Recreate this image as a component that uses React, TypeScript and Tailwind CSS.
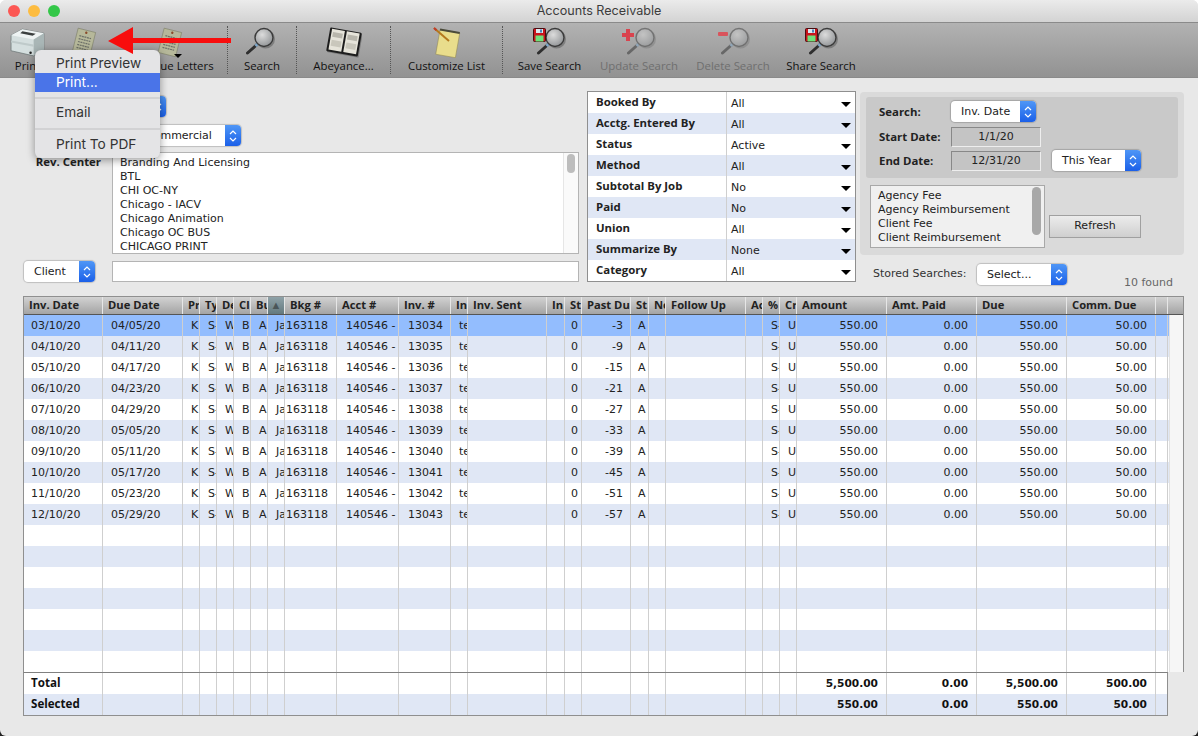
// Accounts Receivable window: toolbar, search filters, invoice list and totals.
import type { ReactNode } from "react";

const colsClass =
  "grid grid-cols-[79px_80px_17px_17px_17px_17px_17px_17px_52px_62px_52px_17px_79px_18px_17px_49px_18px_17px_80px_17px_17px_17px_90px_90px_90px_89px_12px]";

const boldClass = "font-['Open_Sans',sans-serif] font-bold";

const headers = [
  "Inv. Date", "Due Date", "Pr", "Ty", "De", "Cl", "Bu", "▲", "Bkg #", "Acct #", "Inv. #", "In", "Inv. Sent",
  "In", "St", "Past Du", "St", "Ne", "Follow Up", "Ac", "%", "Cr", "Amount", "Amt. Paid", "Due", "Comm. Due", "",
];

const invoices = [
  ["03/10/20", "04/05/20", "13034", "-3"],
  ["04/10/20", "04/11/20", "13035", "-9"],
  ["05/10/20", "04/17/20", "13036", "-15"],
  ["06/10/20", "04/23/20", "13037", "-21"],
  ["07/10/20", "04/29/20", "13038", "-27"],
  ["08/10/20", "05/05/20", "13039", "-33"],
  ["09/10/20", "05/11/20", "13040", "-39"],
  ["10/10/20", "05/17/20", "13041", "-45"],
  ["11/10/20", "05/23/20", "13042", "-51"],
  ["12/10/20", "05/29/20", "13043", "-57"],
];

const filters = [
  ["Booked By", "All"],
  ["Acctg. Entered By", "All"],
  ["Status", "Active"],
  ["Method", "All"],
  ["Subtotal By Job", "No"],
  ["Paid", "No"],
  ["Union", "All"],
  ["Summarize By", "None"],
  ["Category", "All"],
];

const revCenters = [
  "Branding And Licensing", "BTL", "CHI OC-NY", "Chicago - IACV", "Chicago Animation", "Chicago OC BUS", "CHICAGO PRINT",
];

function Magnifier({ className = "" }: { className?: string }) {
  return (
    <svg viewBox="0 0 30 28" className={className}>
      <defs>
        <radialGradient id="lens" cx="0.4" cy="0.35" r="0.8">
          <stop offset="0" stopColor="#dcdcdc" />
          <stop offset="1" stopColor="#85888b" />
        </radialGradient>
      </defs>
      <circle cx="20.5" cy="12" r="9.5" fill="#333" opacity="0.35" />
      <line x1="12" y1="17.5" x2="2.5" y2="26" stroke="#2f2f2f" strokeWidth="3" strokeLinecap="round" />
      <line x1="13" y1="16.5" x2="10.5" y2="19" stroke="#7fa7c9" strokeWidth="3" />
      <circle cx="19" cy="10.5" r="9" fill="url(#lens)" stroke="#3a3a3a" strokeWidth="1.4" />
    </svg>
  );
}

function Floppy({ className }: { className: string }) {
  return (
    <svg viewBox="0 0 13 14" className={`absolute h-[14px] w-[13px] ${className}`}>
      <rect x="0.5" y="0.5" width="12" height="13" rx="1" fill="#c8141c" stroke="#4a0d10" />
      <rect x="3" y="1" width="7" height="4" fill="#dbe8ef" />
      <rect x="7" y="1.5" width="2" height="3" fill="#4c86b8" />
      <rect x="2.5" y="7.5" width="8" height="6" fill="#6fe07a" />
    </svg>
  );
}

function SearchIcon({ lens, badge, dim }: { lens: string; badge?: ReactNode; dim?: boolean }) {
  return (
    <div className="relative h-[32px] w-[36px]">
      <Magnifier className={`absolute top-[1px] h-[28px] w-[30px] ${lens} ${dim ? "opacity-50" : ""}`} />
      {badge}
    </div>
  );
}

function Printer() {
  return (
    <svg viewBox="0 0 38 32" className="h-[33px] w-[39px]">
      <path d="M3 10 L14 4 L35 8 L35 24 L25 30 L3 25 Z" fill="#d5dfdf" stroke="#5f6b6b" strokeWidth="0.6" />
      <path d="M3 10 L25 14 L35 8 L14 4 Z" fill="#eef3f3" />
      <path d="M25 14 L25 30 L35 24 L35 8 Z" fill="#a9b6b6" />
      <path d="M14 6 L27 8.5 L24 10.5 L12 8 Z" fill="#3b3f3f" />
      <path d="M3 15 L25 19 L25 21 L3 17 Z" fill="#bfcaca" />
      <circle cx="22" cy="27" r="1.2" fill="#222" />
    </svg>
  );
}

function Letter() {
  return (
    <svg viewBox="0 0 28 30" className="h-[30px] w-[28px]">
      <g transform="rotate(14 14 15)">
        <rect x="5" y="3" width="18" height="25" fill="#b6b89a" stroke="#75775f" strokeWidth="0.5" />
        <circle cx="14" cy="5.5" r="1.2" fill="#8a4a2a" />
        {[10, 13, 16, 19, 22].map((y) => (
          <line key={y} x1="8" x2="20" y1={y} y2={y} stroke="#6d7068" strokeWidth="1.2" strokeDasharray="2 0.6" />
        ))}
      </g>
    </svg>
  );
}

function Book() {
  return (
    <svg viewBox="0 0 36 32" className="h-[32px] w-[36px]">
      <g transform="rotate(10 18 16)">
        <rect x="3" y="5" width="32" height="24" rx="1" fill="#555" opacity="0.5" />
        <rect x="2" y="4" width="32" height="24" rx="1" fill="#1d1d1d" />
        <rect x="4" y="5" width="13" height="21" fill="#e6e4da" />
        <rect x="19" y="5" width="13" height="21" fill="#e6e4da" />
        <rect x="5.5" y="8" width="10" height="5" fill="#b8b6ac" />
        <rect x="20.5" y="8" width="10" height="5" fill="#b8b6ac" />
        <rect x="5.5" y="16" width="10" height="6" fill="#c9c7bc" />
        <rect x="20.5" y="16" width="10" height="6" fill="#c9c7bc" />
      </g>
    </svg>
  );
}

function Notepad() {
  return (
    <svg viewBox="0 0 30 32" className="h-[32px] w-[30px]">
      <g transform="rotate(10 15 16)">
        <rect x="6" y="5" width="20" height="25" fill="#e9dd8c" stroke="#8f8650" strokeWidth="0.5" />
        <rect x="6" y="4" width="20" height="2" fill="#4a4a3a" />
      </g>
      <line x1="2" y1="2" x2="17" y2="15" stroke="#b5791d" strokeWidth="2" />
      <line x1="2" y1="2" x2="4.5" y2="4.2" stroke="#c0392b" strokeWidth="2" />
    </svg>
  );
}

function ToolItem({ width, label, icon, dim }: { width: string; label?: string; icon: ReactNode; dim?: boolean }) {
  return (
    <div className={`flex h-full shrink-0 flex-col items-center ${width}`}>
      <div className="flex h-[34px] items-center justify-center pt-[3px]">{icon}</div>
      {label && (
        <span className={`mt-[1px] whitespace-nowrap text-[11.4px] leading-[15px] ${dim ? "text-[#6f6f6f]" : "text-[#111]"}`}>
          {label}
        </span>
      )}
    </div>
  );
}

function Sep() {
  return <div className="my-[3px] w-0 shrink-0 border-l border-dotted border-[#555]" />;
}

function Stepper() {
  return (
    <span className="flex h-full w-[16px] shrink-0 items-center justify-center rounded-r-[4px] bg-gradient-to-b from-[#4f96f6] to-[#1b5fe8]">
      <svg viewBox="0 0 8 14" className="h-[14px] w-[8px]" fill="none" stroke="#fff" strokeWidth="1.2">
        <path d="M1 5 L4 2 L7 5" />
        <path d="M1 9 L4 12 L7 9" />
      </svg>
    </span>
  );
}

function Popup({ label, className, textClass = "pl-[10px]" }: { label: string; className: string; textClass?: string }) {
  return (
    <div className={`flex h-[21px] shrink-0 items-center rounded-[4px] bg-white shadow-[0_0_1px_1px_rgba(0,0,0,0.18)] ${className}`}>
      <span className={`flex-1 truncate pt-[1px] text-[11px] font-normal text-[#222] ${textClass}`}>{label}</span>
      <Stepper />
    </div>
  );
}

function InvoiceRow({ row, index }: { row: string[]; index: number }) {
  const bg = index === 0 ? "bg-[#93bdfe]" : index % 2 ? "bg-[#e0e7f5]" : "bg-white";
  const cells: [string, string][] = [
    [row[0], "pl-[7px]"],
    [row[1], "pl-[8px]"],
    ["K", "pl-[8px]"],
    ["S-", "pl-[8px]"],
    ["W", "pl-[8px]"],
    ["B", "pl-[8px]"],
    ["A", "pl-[8px]"],
    ["Ja", "pl-[8px]"],
    ["163118", "pl-[1px]"],
    ["140546 -", "pl-[9px]"],
    [row[2], "pl-[9px]"],
    ["te", "pl-[8px]"],
    ["", ""],
    ["", ""],
    ["0", "pr-[3px] text-right"],
    [row[3], "pr-[7px] text-right"],
    ["A", "pl-[7px]"],
    ["", ""],
    ["", ""],
    ["", ""],
    ["S-", "pl-[8px]"],
    ["U", "pl-[8px]"],
    ["550.00", "pr-[8px] text-right"],
    ["0.00", "pr-[8px] text-right"],
    ["550.00", "pr-[8px] text-right"],
    ["50.00", "pr-[8px] text-right"],
    ["", ""],
  ];
  return (
    <div className={`${colsClass} h-[21px] ${bg}`}>
      {cells.map(([text, pad], i) => (
        <div key={i} className={`overflow-hidden whitespace-nowrap border-r border-[#cfcfcf] text-[11px] leading-[22px] text-[#222] ${pad}`}>
          {text}
        </div>
      ))}
    </div>
  );
}

function TotalRow({ label, values, bg }: { label: string; values: string[]; bg: string }) {
  const blanks = Array.from({ length: 21 });
  return (
    <div className={`${colsClass} h-[21px] ${bg} text-[#111]`}>
      <div className={`border-r border-[#cfcfcf] pl-[7px] text-[11.6px] leading-[20px] ${boldClass}`}>{label}</div>
      {blanks.map((_, i) => (
        <div key={i} className="border-r border-[#cfcfcf]" />
      ))}
      {values.map((v) => (
        <div key={v + label} className="border-r border-[#cfcfcf] pr-[8px] text-right text-[10.6px] font-bold leading-[20px]">
          {v}
        </div>
      ))}
    </div>
  );
}

export default function App() {
  return (
    <div className="relative h-[736px] w-[1198px] overflow-hidden bg-gradient-to-b from-white via-white to-[#222] font-['DejaVu_Sans',sans-serif]">
      <div className="flex h-full flex-col overflow-hidden rounded-[6px] bg-[#e8e8e8]">
        {/* title bar */}
        <div className="relative flex h-[22px] shrink-0 items-center justify-center bg-gradient-to-b from-[#ebebeb] to-[#d3d3d3] font-['Inter',sans-serif] text-[12.6px] text-[#3c3c3c]">
          <div className="absolute left-[8px] top-[5px] flex gap-[8px]">
            <span className="h-[12px] w-[12px] rounded-full bg-[#fc5753]" />
            <span className="h-[12px] w-[12px] rounded-full bg-[#fdbc40]" />
            <span className="h-[12px] w-[12px] rounded-full bg-[#33c748]" />
          </div>
          Accounts Receivable
        </div>

        {/* toolbar */}
        <div className="flex h-[56px] shrink-0 border-y border-[#8a8a8a] bg-gradient-to-b from-[#b2b2b2] to-[#929292] font-['Open_Sans',sans-serif]">
          <ToolItem width="w-[55px]" label="Print" icon={<Printer />} />
          <ToolItem width="w-[58px]" icon={<Letter />} />
          <div className="relative w-[114px] shrink-0">
            <ToolItem width="w-full" label="Past Due Letters" icon={<Letter />} />
            <span className="absolute left-[61px] top-[31px] h-0 w-0 border-x-[4px] border-t-[4px] border-x-transparent border-t-black" />
          </div>
          <Sep />
          <ToolItem width="w-[68px]" label="Search" icon={<SearchIcon lens="left-[1px]" />} />
          <Sep />
          <ToolItem width="w-[93px]" label="Abeyance..." icon={<Book />} />
          <Sep />
          <ToolItem width="w-[111px]" label="Customize List" icon={<Notepad />} />
          <Sep />
          <ToolItem
            width="w-[93px]"
            label="Save Search"
            icon={<SearchIcon lens="left-[4px]" badge={<Floppy className="left-[1px] top-[2px]" />} />}
          />
          <ToolItem
            width="w-[86px]"
            dim
            label="Update Search"
            icon={
              <SearchIcon
                dim
                lens="left-[5px]"
                badge={
                  <svg viewBox="0 0 12 12" className="absolute left-[1px] top-[3px] h-[12px] w-[12px]">
                    <path d="M4 0 H8 V4 H12 V8 H8 V12 H4 V8 H0 V4 H4 Z" fill="#d9434e" />
                  </svg>
                }
              />
            }
          />
          <ToolItem
            width="w-[102px]"
            dim
            label="Delete Search"
            icon={
              <SearchIcon
                dim
                lens="left-[5px]"
                badge={<span className="absolute left-[3px] top-[6px] h-[4px] w-[10px] rounded-[1px] bg-[#d9545c]" />}
              />
            }
          />
          <ToolItem
            width="w-[74px]"
            label="Share Search"
            icon={<SearchIcon lens="left-[5px]" badge={<Floppy className="left-[2px] top-[2px]" />} />}
          />
        </div>

        {/* search area */}
        <div className="flex flex-col pl-[23px] pr-[14px]">
          <div className="flex h-[217px] shrink-0">
            <div className="flex w-[556px] shrink-0 flex-col pl-[1px]">
              <div className="ml-[88px] mt-[18px]">
                <Popup label="" className="w-[54px]" />
              </div>
              <div className="ml-[88px] mt-[8px]">
                <Popup label="Commercial" className="w-[129px]" textClass="pl-[34px]" />
              </div>
              <div className="mt-[6px] flex items-start">
                <span className={`w-[77px] whitespace-nowrap pt-[3px] text-right text-[11.4px] leading-[14px] text-[#222] ${boldClass}`}>Rev. Center</span>
                <div className="ml-[11px] flex h-[102px] w-[467px] border border-[#b4b4b4] bg-white">
                  <div className="flex-1 overflow-hidden pl-[7px] pt-[3px] text-[11px] leading-[14px] text-[#222]">
                    {revCenters.map((c) => (
                      <div key={c}>{c}</div>
                    ))}
                  </div>
                  <div className="w-[15px] border-l border-[#e6e6e6] bg-[#fafafa] px-[3px] pt-[1px]">
                    <div className="h-[19px] rounded-full bg-[#bdbdbd]" />
                  </div>
                </div>
              </div>
              <div className="mt-[7px] flex items-center">
                <Popup label="Client" className="w-[71px]" />
                <div className="ml-[17px] h-[21px] w-[467px] border border-[#b4b4b4] bg-white" />
              </div>
            </div>

            {/* filter grid */}
            <div className="ml-[8px] mt-[13px] h-[191px] w-[269px] shrink-0 border border-[#8f8f8f] bg-white text-[11px] text-[#222]">
              {filters.map(([name, value], i) => (
                <div key={name} className={`flex h-[21px] ${i % 2 ? "bg-[#e0e7f5]" : "bg-white"}`}>
                  <div className={`w-[139px] border-r border-[#cfcfcf] pl-[8px] text-[11.4px] leading-[19px] ${boldClass}`}>{name}</div>
                  <div className="flex flex-1 items-center px-[4px] pt-[3px]">
                    <span className="flex-1">{value}</span>
                    <span className="h-0 w-0 border-x-[5px] border-t-[5px] border-x-transparent border-t-black" />
                  </div>
                </div>
              ))}
            </div>

            {/* date search */}
            <div className="ml-[4px] mt-[14px] flex w-[324px] shrink-0 flex-col">
              <div className="h-[163px] rounded-[4px] bg-[#dadada] px-[6px] pt-[5px]">
                <div className={`h-[81px] rounded-[3px] bg-[#c9c9c9] pl-[13px] pt-[4px] text-[11.4px] text-[#222] ${boldClass}`}>
                  <div className="flex h-[21px] items-center">
                    <span className="w-[72px]">Search:</span>
                    <Popup label="Inv. Date" className="w-[85px] font-['DejaVu_Sans',sans-serif]" />
                  </div>
                  <div className="mt-[5px] flex h-[20px] items-center">
                    <span className="w-[72px]">Start Date:</span>
                    <div className="h-[20px] w-[90px] border border-b-[#eee] border-l-[#888] border-r-[#eee] border-t-[#888] bg-[#c4c4c4] text-center font-['DejaVu_Sans',sans-serif] text-[11px] font-normal leading-[17px]">
                      1/1/20
                    </div>
                  </div>
                  <div className="mt-[3px] flex h-[21px] items-center">
                    <span className="w-[72px]">End Date:</span>
                    <div className="h-[20px] w-[90px] border border-b-[#eee] border-l-[#888] border-r-[#eee] border-t-[#888] bg-[#c4c4c4] text-center font-['DejaVu_Sans',sans-serif] text-[11px] font-normal leading-[17px]">
                      12/31/20
                    </div>
                    <Popup label="This Year" className="ml-[11px] w-[89px] font-['DejaVu_Sans',sans-serif]" />
                  </div>
                </div>
                <div className="flex items-end pl-[4px] pt-[7px]">
                  <div className="flex h-[63px] w-[175px] border border-[#a8a8a8] bg-[#f0f0f0]">
                    <div className="flex-1 overflow-hidden pl-[7px] pt-[3px] text-[11px] leading-[14px] text-[#222]">
                      <div>Agency Fee</div>
                      <div>Agency Reimbursement</div>
                      <div>Client Fee</div>
                      <div>Client Reimbursement</div>
                    </div>
                    <div className="w-[15px] px-[3px] pt-[1px]">
                      <div className="h-[48px] rounded-full bg-[#a8a8a8]" />
                    </div>
                  </div>
                  <div className="mb-[10px] ml-[4px] flex h-[23px] w-[92px] items-center justify-center border border-[#a0a0a0] bg-gradient-to-b from-[#ececec] to-[#cfcfcf] text-[11px] text-[#222]">
                    Refresh
                  </div>
                </div>
              </div>
              <div className="mt-[9px] flex items-start pl-[13px] text-[11px] text-[#333]">
                <span className="w-[104px] pt-[2px]">Stored Searches:</span>
                <Popup label="Select..." className="w-[90px]" />
                <span className="ml-auto mr-[11px] mt-[11px] text-[#666]">10 found</span>
              </div>
            </div>
          </div>

          {/* invoice list */}
          <div className="mt-[1px] h-[376px] w-[1161px] shrink-0 border-x border-t border-[#8f8f8f]">
            <div className={`${colsClass} h-[17px] bg-gradient-to-b from-[#d2d2d2] to-[#a4a4a4] text-[11.2px] leading-[16px] text-[#222] ${boldClass}`}>
              {headers.map((h, i) =>
                h === "▲" ? (
                  <div key={i} className="border-r border-[#e6e6e6] bg-gradient-to-b from-[#8fa2a8] to-[#64797e] text-center text-[11px] font-normal text-[#4a5558]">
                    ▲
                  </div>
                ) : (
                  <div key={i} className="overflow-hidden whitespace-nowrap border-r border-[#e6e6e6] pl-[5px]">
                    {h}
                  </div>
                ),
              )}
            </div>
            <div className="flex h-[358px] border-t border-[#555]">
              <div className="w-[1145px] shrink-0">
                {Array.from({ length: 17 }).map((_, i) =>
                  invoices[i] ? (
                    <InvoiceRow key={i} row={invoices[i]} index={i} />
                  ) : (
                    <div key={i} className={`${colsClass} h-[21px] ${i % 2 ? "bg-[#e0e7f5]" : "bg-white"}`}>
                      {headers.map((_, j) => (
                        <div key={j} className="border-r border-[#cfcfcf]" />
                      ))}
                    </div>
                  ),
                )}
              </div>
              <div className="flex-1 border-l border-[#e2e2e2] bg-[#f6f6f6]" />
            </div>
          </div>

          {/* totals */}
          <div className="w-[1145px] shrink-0 border-x border-b border-t border-[#8f8f8f] border-t-[#808080]">
            <TotalRow label="Total" bg="bg-white" values={["5,500.00", "0.00", "5,500.00", "500.00"]} />
            <TotalRow label="Selected" bg="bg-[#e0e7f5]" values={["550.00", "0.00", "550.00", "50.00"]} />
          </div>
        </div>
      </div>

      {/* print dropdown */}
      <div className="absolute left-[35px] top-[50px] w-[125px] rounded-[6px] bg-[#e4e4e6] pb-[4px] pt-[3px] font-['Inter',sans-serif] text-[13.7px] text-[#333] shadow-[0_2px_8px_rgba(0,0,0,0.4)]">
        <div className="h-[20px] pl-[21px] leading-[20px]">Print Preview</div>
        <div className="h-[19px] bg-[#4a74e8] pl-[21px] leading-[19px] text-white">Print...</div>
        <div className="mt-[5px] h-[2px] bg-[#d2d2d4]" />
        <div className="mt-[4px] h-[19px] pl-[21px] leading-[19px]">Email</div>
        <div className="mt-[6px] h-[2px] bg-[#d2d2d4]" />
        <div className="mt-[5px] h-[19px] pl-[21px] leading-[19px]">Print To PDF</div>
      </div>

      {/* red annotation arrow */}
      <svg viewBox="0 0 124 28" className="absolute left-[108px] top-[27px] h-[28px] w-[124px]">
        <path d="M0 14 L25 0 L25 11 L123 11 L123 16 L25 16 L25 27 Z" fill="#f80d0d" />
      </svg>
    </div>
  );
}
